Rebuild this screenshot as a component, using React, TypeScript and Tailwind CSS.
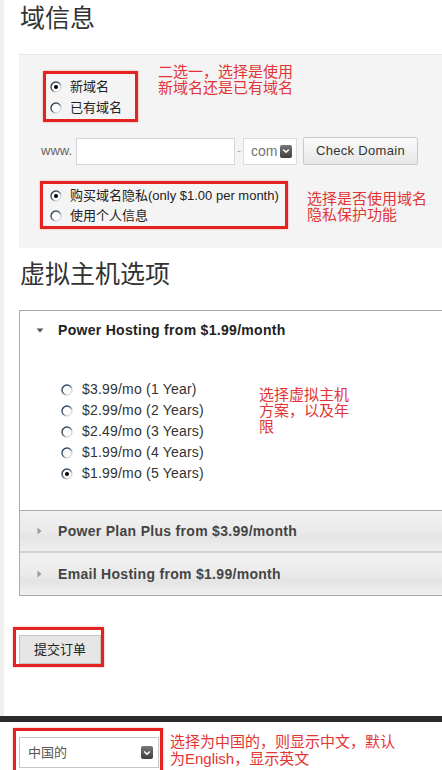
import React from "react";

const FONT = { fontFamily: '"Liberation Sans", Arial, "Noto Sans CJK SC", sans-serif' };

function Radio({ checked }: { checked?: boolean }) {
  return (
    <svg width="12" height="12" viewBox="0 0 12 12" className="shrink-0">
      <defs>
        <linearGradient id="rgrad" x1="0" y1="0" x2="1" y2="1">
          <stop offset="0" stopColor="#1c3044" />
          <stop offset="0.45" stopColor="#4f6173" />
          <stop offset="0.7" stopColor="#c9d0d6" />
          <stop offset="1" stopColor="#f4f6f8" />
        </linearGradient>
      </defs>
      <circle cx="6" cy="6" r="5" fill="#fbfbfb" stroke="url(#rgrad)" strokeWidth="1.4" />
      {checked && <circle cx="6" cy="6" r="2" fill="#000" />}
    </svg>
  );
}

function DarkArrow() {
  return (
    <div className="w-[12px] h-[13px] rounded-[2px] bg-[linear-gradient(to_bottom,#777,#3e3e3e)] flex items-center justify-center shrink-0">
      <svg width="8" height="6" viewBox="0 0 8 6">
        <path d="M1.2 1.5 L4 4.3 L6.8 1.5" stroke="#fff" strokeWidth="1.5" fill="none" />
      </svg>
    </div>
  );
}

function Note({ children, className = "" }: { children: React.ReactNode; className?: string }) {
  return (
    <div className={"text-[15px] leading-[16px] text-[#e23434] " + className}>{children}</div>
  );
}

export default function App() {
  const plans = [
    "$3.99/mo (1 Year)",
    "$2.99/mo (2 Years)",
    "$2.49/mo (3 Years)",
    "$1.99/mo (4 Years)",
    "$1.99/mo (5 Years)",
  ];
  const redBox = "border-[3px] border-[#e52222] shadow-[0_0_2px_#f3a0a0]";
  const collapsedBg =
    "bg-[linear-gradient(to_bottom,#f1f1f1_0%,#ebebeb_50%,#e4e4e4_66%,#f0f0f0_100%)]";
  return (
    <div className="w-[442px] h-[770px] overflow-hidden bg-white text-[#222]" style={FONT}>
      <div className="flex h-[716px]">
        <div className="w-[4px] shrink-0 bg-[#efefef]" />
        <div className="flex-1 pl-[15px] min-w-0">
          <h1 className="h-[36px] leading-[36px] text-[25px] text-[#333] pl-[1px] font-normal">域信息</h1>

          <div className="mt-[18px] h-[194px] bg-[#f4f4f4] border-t border-[#e8e8e8] pt-[9px]">
            <div className="flex items-start pl-[24px]">
              <div className={"mt-[7px] w-[95px] h-[51px] pl-[4px] pt-[2px] " + redBox}>
                <div className="flex items-center h-[21px] gap-[8px] text-[13px]">
                  <Radio checked />
                  <span>新域名</span>
                </div>
                <div className="flex items-center h-[21px] gap-[8px] text-[13px]">
                  <Radio />
                  <span>已有域名</span>
                </div>
              </div>
              <Note className="ml-[20px]">
                <div>二选一，选择是使用</div>
                <div>新域名还是已有域名</div>
              </Note>
            </div>

            <div className="mt-[15px] flex items-center h-[28px] pl-[22px]">
              <span className="w-[35px] text-[13px] text-[#666]">www.</span>
              <div className="w-[159px] h-[27px] bg-white border border-[#d6d6d6]" />
              <span className="w-[8px] text-center text-[12px] text-[#aaa]">-</span>
              <div className="w-[54px] h-[27px] bg-white border border-[#dcdcdc] flex items-center pl-[7px] pr-[4px]">
                <span className="text-[14px] text-[#777]">com</span>
                <div className="ml-auto">
                  <DarkArrow />
                </div>
              </div>
              <button className="ml-[6px] w-[115px] h-[28px] rounded-[2px] border border-[#c9c9c9] bg-[linear-gradient(to_bottom,#fbfbfb,#e6e6e6)] text-[13px] text-[#333] tracking-[0.3px]">
                Check Domain
              </button>
            </div>

            <div className="mt-[16px] flex items-start pl-[21px]">
              <div className={"w-[248px] h-[48px] pl-[7px] pt-[2px] " + redBox}>
                <div className="flex items-center h-[20px] gap-[8px] text-[13px]">
                  <Radio checked />
                  <span>购买域名隐私(only $1.00 per month)</span>
                </div>
                <div className="flex items-center h-[20px] gap-[8px] text-[13px]">
                  <Radio />
                  <span>使用个人信息</span>
                </div>
              </div>
              <Note className="ml-[19px] mt-[10px]">
                <div>选择是否使用域名</div>
                <div>隐私保护功能</div>
              </Note>
            </div>
          </div>

          <h2 className="mt-[8px] h-[36px] leading-[36px] text-[25px] text-[#333] pl-[1px] font-normal">虚拟主机选项</h2>

          <div className="mt-[18px] border border-r-0 border-[#aaaaaa]">
            <div className="h-[39px] flex items-center pl-[16px]">
              <svg width="8" height="5" viewBox="0 0 8 5">
                <path d="M0.5 0.5 L7.5 0.5 L4 4.5 Z" fill="#555" />
              </svg>
              <span className="ml-[14px] text-[14px] font-bold text-[#222] tracking-[0.3px]">Power Hosting from $1.99/month</span>
            </div>
            <div className="flex items-start pl-[41px] pt-[29px] pb-[26px] border-b border-[#aaaaaa]">
              <div className="w-[198px] shrink-0">
                {plans.map((p, i) => (
                  <div key={i} className="flex items-center h-[21px] gap-[9px] text-[14px] text-[#333] tracking-[0.2px]">
                    <Radio checked={i === 4} />
                    <span>{p}</span>
                  </div>
                ))}
              </div>
              <Note className="mt-[8px]">
                <div>选择虚拟主机</div>
                <div>方案，以及年</div>
                <div>限</div>
              </Note>
            </div>
            {["Power Plan Plus from $3.99/month", "Email Hosting from $1.99/month"].map((t, i) => (
              <div
                key={i}
                className={
                  "h-[42px] flex items-center pl-[17px] " +
                  collapsedBg +
                  (i === 0 ? " border-b-2 border-[#d2d2d2]" : "")
                }
              >
                <svg width="5" height="8" viewBox="0 0 5 8">
                  <path d="M0.5 0.5 L4.5 4 L0.5 7.5 Z" fill="#9a9a9a" />
                </svg>
                <span className="ml-[16px] text-[14px] font-bold text-[#444] tracking-[0.3px]">{t}</span>
              </div>
            ))}
          </div>

          <div className={"mt-[31px] -ml-[6px] w-[91px] h-[40px] pt-[5px] pl-[3px] " + redBox}>
            <button className="w-[82px] h-[29px] bg-[#e6e6e6] border border-[#c4c4c4] text-[13px] text-[#222]">
              提交订单
            </button>
          </div>
        </div>
      </div>

      <div className="h-[6px] bg-[#2b2b2b]" />

      <div className="pt-[6px] pl-[13px] flex items-start">
        <div className={"w-[150px] h-[45px] pl-[3px] pt-[6px] " + redBox}>
          <div className="w-[140px] h-[31px] bg-white border border-[#c6c6c6] flex items-center pl-[8px] pr-[5px]">
            <span className="text-[13px] text-[#555]">中国的</span>
            <div className="ml-auto">
              <DarkArrow />
            </div>
          </div>
        </div>
        <Note className="ml-[7px] mt-[5px] leading-[17px]">
          <div>选择为中国的，则显示中文，默认</div>
          <div>为English，显示英文</div>
        </Note>
      </div>
    </div>
  );
}
